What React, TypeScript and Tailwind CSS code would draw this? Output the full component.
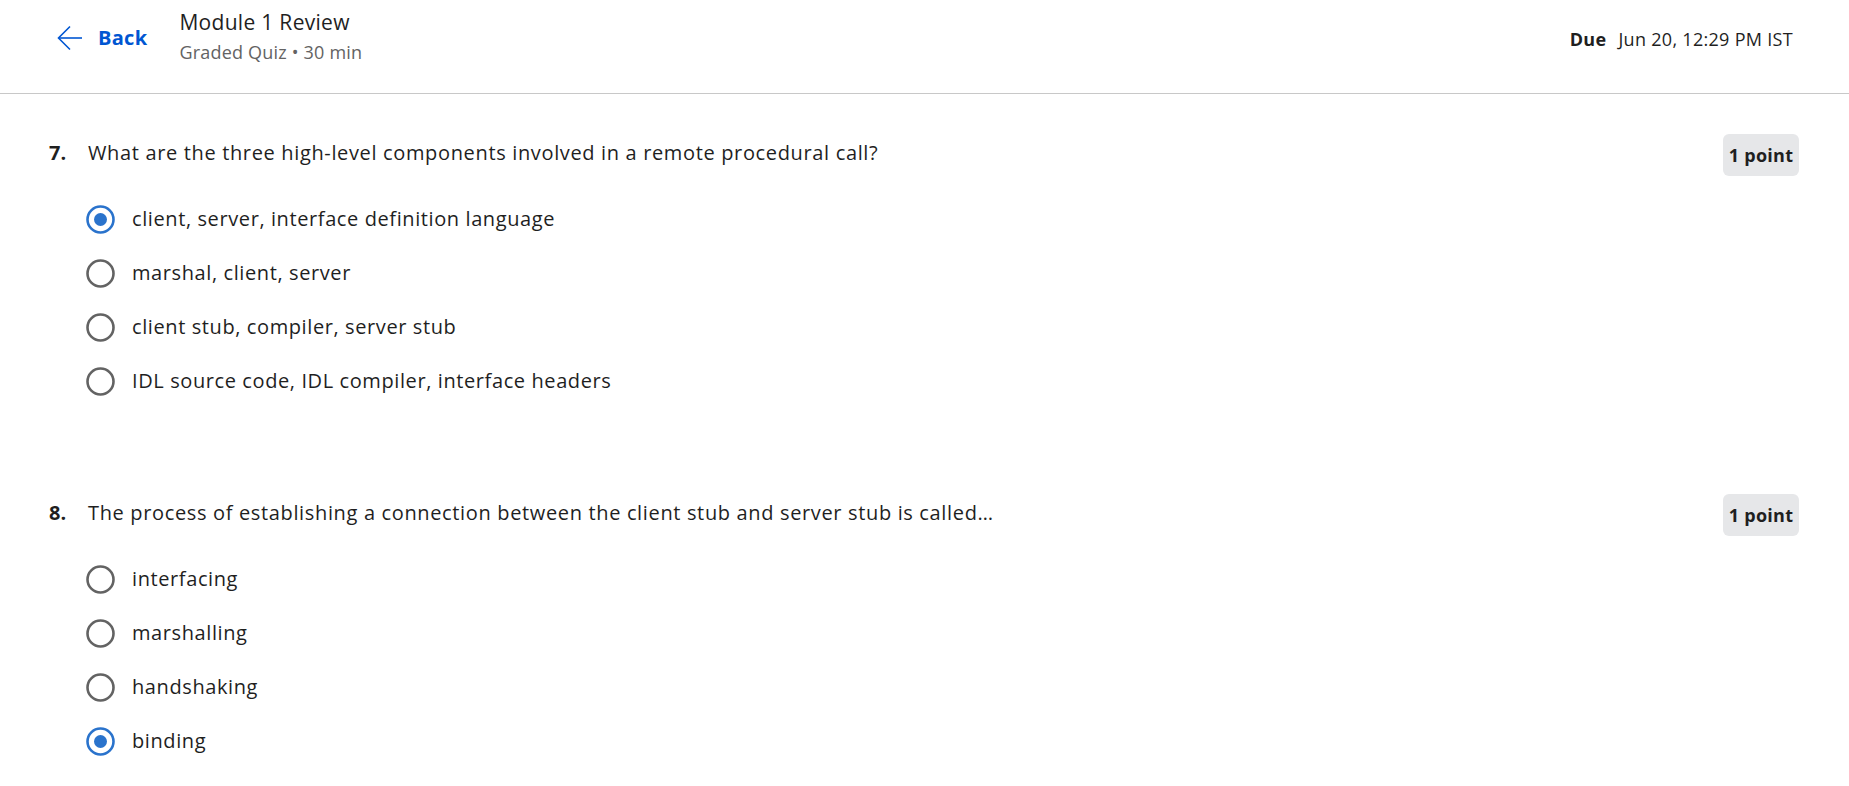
import React from "react";

const font = { fontFamily: "'Open Sans', 'Noto Sans', sans-serif" };

function Radio({ checked }: { checked: boolean }) {
  return (
    <svg width="29" height="29" viewBox="0 0 29 29" className="shrink-0">
      <circle
        cx="14.5"
        cy="14.5"
        r="13"
        fill="white"
        stroke={checked ? "#2a73cc" : "#636363"}
        strokeWidth="2.6"
      />
      {checked && <circle cx="14.5" cy="14.5" r="6.5" fill="#2a73cc" />}
    </svg>
  );
}

function Question({
  num,
  text,
  options,
  selected,
}: {
  num: number;
  text: string;
  options: string[];
  selected: number;
}) {
  return (
    <div>
      <div className="flex items-center justify-between h-[42px]">
        <div className="flex items-center -mt-[4px]">
          <span className="w-[39px] text-[20px] font-bold text-[#1f1f1f]">{num}.</span>
          <span className="text-[20px] text-[#1f1f1f] tracking-[0.65px]">{text}</span>
        </div>
        <div className="h-[42px] w-[76px] rounded-[6px] bg-[#e6e7e9] flex items-center justify-center text-[18px] font-bold text-[#1f1f1f] tracking-[0.3px]">
          1 point
        </div>
      </div>
      <div className="mt-[16px] pl-[37px]">
        {options.map((o, i) => (
          <div key={i} className="h-[54px] flex items-center gap-[17px]">
            <Radio checked={i === selected} />
            <span className="text-[20px] text-[#1f1f1f] tracking-[0.6px]">{o}</span>
          </div>
        ))}
      </div>
    </div>
  );
}

export default function App() {
  return (
    <div className="min-h-screen bg-white" style={font}>
      <header className="h-[94px] border-b border-[#c8c8c8] flex items-start justify-between pl-[57px] pr-[56px]">
        <div className="flex items-start">
          <button className="flex items-center gap-[15px] mt-[25px] text-[#0056d2]">
            <svg width="26" height="26" viewBox="0 0 26 26" fill="none" stroke="#0056d2" strokeWidth="1.6">
              <path d="M25 13H2" />
              <path d="M13 1.5L1.5 13L13 24.5" />
            </svg>
            <span className="text-[20px] font-bold leading-[26px] tracking-[0.3px]">Back</span>
          </button>
          <div className="ml-[32px] mt-[8px]">
            <div className="text-[21px] leading-[28px] text-[#1f1f1f] tracking-[0.3px]">Module 1 Review</div>
            <div className="text-[18px] leading-[24px] text-[#636363] mt-[4px] tracking-[0.2px]">Graded Quiz • 30 min</div>
          </div>
        </div>
        <div className="mt-[27px] text-[18px] leading-[24px] text-[#1f1f1f] tracking-[0.3px]">
          <span className="font-bold">Due</span>
          <span className="ml-[12px]">Jun 20, 12:29 PM IST</span>
        </div>
      </header>
      <main className="pl-[49px] pr-[50px] pt-[40px]">
        <Question
          num={7}
          text="What are the three high-level components involved in a remote procedural call?"
          options={[
            "client, server, interface definition language",
            "marshal, client, server",
            "client stub, compiler, server stub",
            "IDL source code, IDL compiler, interface headers",
          ]}
          selected={0}
        />
        <div className="h-[86px]" />
        <Question
          num={8}
          text="The process of establishing a connection between the client stub and server stub is called…"
          options={["interfacing", "marshalling", "handshaking", "binding"]}
          selected={3}
        />
      </main>
    </div>
  );
}
